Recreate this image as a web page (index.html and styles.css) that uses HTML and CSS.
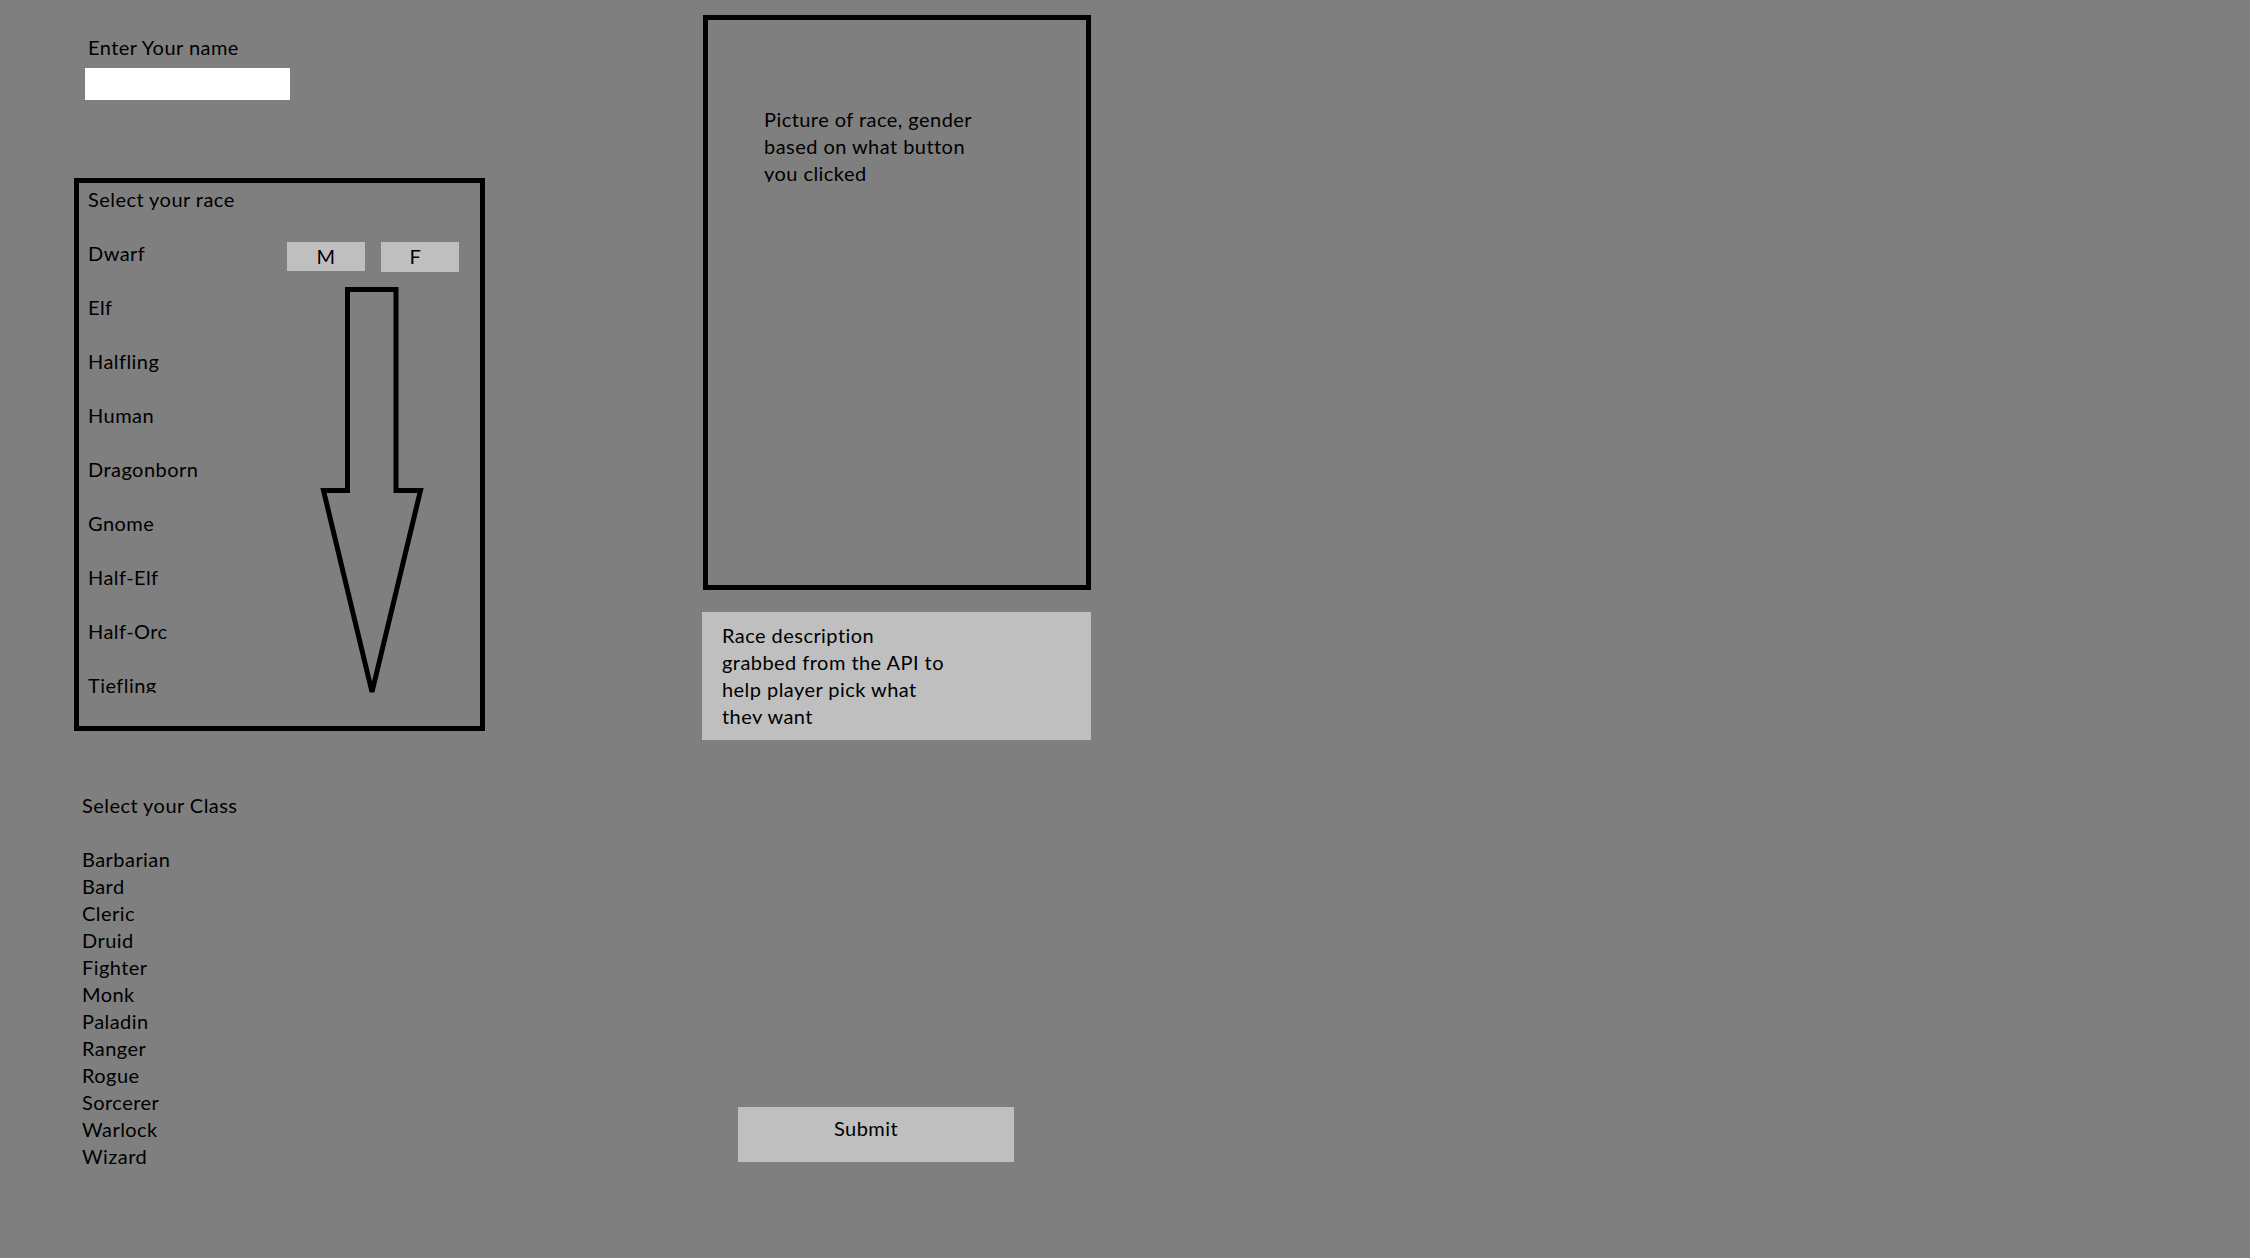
FILE: index.html
```html
<!DOCTYPE html>
<html lang="en">
<head>
<meta charset="utf-8">
<title>Character Creator</title>
<link rel="stylesheet" href="styles.css">
</head>
<body>
<div class="page">
  <div class="left-col">
    <div class="name-label">Enter Your name</div>
    <div class="name-input"></div>

    <div class="race-box">
      <div class="race-list">
        <div class="race-row race-title">Select your race</div>
        <div class="race-row">
          <span class="race-name">Dwarf</span>
          <span class="gender-btn btn-m">M</span>
          <span class="gender-btn btn-f">F</span>
        </div>
        <div class="race-row">Elf</div>
        <div class="race-row">Halfling</div>
        <div class="race-row">Human</div>
        <div class="race-row">Dragonborn</div>
        <div class="race-row">Gnome</div>
        <div class="race-row">Half-Elf</div>
        <div class="race-row">Half-Orc</div>
        <div class="race-row">Tiefling</div>
      </div>
      <svg class="arrow" width="411" height="553" viewBox="0 0 411 553" xmlns="http://www.w3.org/2000/svg">
        <polygon points="273.5,111.5 322,111.5 322,312.5 346.5,312.5 298,514 249.5,312.5 273.5,312.5" fill="none" stroke="#000" stroke-width="5" stroke-linejoin="miter" stroke-miterlimit="4"/>
      </svg>
    </div>

    <div class="class-section">
      <div class="class-title">Select your Class</div>
      <ul class="class-list">
        <li>Barbarian</li>
        <li>Bard</li>
        <li>Cleric</li>
        <li>Druid</li>
        <li>Fighter</li>
        <li>Monk</li>
        <li>Paladin</li>
        <li>Ranger</li>
        <li>Rogue</li>
        <li>Sorcerer</li>
        <li>Warlock</li>
        <li>Wizard</li>
      </ul>
    </div>
  </div>

  <div class="mid-col">
    <div class="picture-box">
      <div class="picture-text">Picture of race, gender<br>based on what button<br>you clicked</div>
    </div>
    <div class="desc-box">
      <div class="desc-text">Race description<br>grabbed from the API to<br>help player pick what<br>they want</div>
    </div>
    <div class="submit-btn">Submit</div>
  </div>
</div>
</body>
</html>
```

FILE: styles.css
```css
html, body {
  margin: 0;
  padding: 0;
}

body {
  background: #7f7f7f;
  width: 2250px;
  height: 1258px;
  overflow: hidden;
  font-family: Lato, "Open Sans", "Liberation Sans", sans-serif;
  font-size: 20px;
  letter-spacing: 0.45px;
  line-height: 27px;
  color: #000;
}

.page {
  display: flex;
  align-items: flex-start;
}

/* ---------- left column ---------- */
.left-col {
  margin-left: 74px;
  padding-top: 34px;
  width: 411px;
  display: flex;
  flex-direction: column;
}

.name-label {
  padding-left: 14px;
}

.name-input {
  margin-top: 7px;
  margin-left: 11px;
  width: 205px;
  height: 32px;
  background: #fff;
}

.race-box {
  position: relative;
  margin-top: 78px;
  box-sizing: border-box;
  width: 411px;
  height: 553px;
  border: 5px solid #000;
  padding: 3px 0 0 9px;
}

.race-list {
  height: 507px;
  overflow: hidden;
}

.race-row {
  display: flex;
  align-items: flex-start;
  height: 54px;
}

.race-name {
  width: 199px;
}

.gender-btn {
  margin-top: 2px;
  width: 78px;
  height: 29px;
  background: #bfbfbf;
  text-align: center;
  line-height: 29px;
}

.btn-f {
  margin-left: 16px;
  height: 30px;
  padding-right: 9px;
  box-sizing: border-box;
}

.arrow {
  position: absolute;
  left: -5px;
  top: -5px;
  pointer-events: none;
}

.class-section {
  margin-top: 61px;
  padding-left: 8px;
}

.class-list {
  list-style: none;
  margin: 27px 0 0 0;
  padding: 0;
}

.class-list li {
  height: 27px;
  line-height: 27px;
}

/* ---------- middle column ---------- */
.mid-col {
  margin-left: 217px;
  padding-top: 15px;
  display: flex;
  flex-direction: column;
}

.picture-box {
  margin-left: 1px;
  box-sizing: border-box;
  width: 388px;
  height: 575px;
  border: 5px solid #000;
  padding: 86px 0 0 56px;
}

.picture-text {
  height: 76px;
  overflow: hidden;
}

.desc-box {
  margin-top: 22px;
  box-sizing: border-box;
  width: 389px;
  height: 128px;
  background: #bfbfbf;
  padding: 10px 0 0 20px;
}

.desc-text {
  height: 102px;
  overflow: hidden;
}

.submit-btn {
  margin-top: 367px;
  margin-left: 36px;
  box-sizing: border-box;
  width: 276px;
  height: 55px;
  background: #bfbfbf;
  padding: 8px 0 0 96px;
}
```
